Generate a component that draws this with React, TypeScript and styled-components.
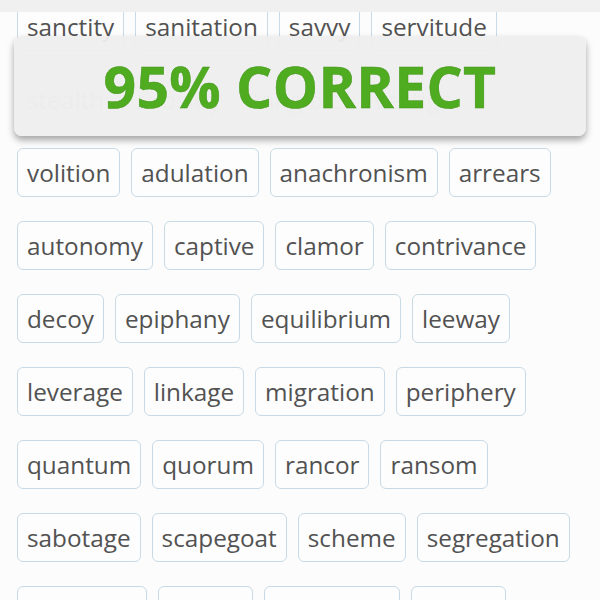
import React from "react";
import styled, { createGlobalStyle } from "styled-components";

const GlobalStyle = createGlobalStyle`
  html, body {
    margin: 0;
    padding: 0;
    background: #fcfcfc;
    font-family: "Open Sans", "Noto Sans", sans-serif;
  }
`;

const Screen = styled.div`
  position: relative;
  width: 600px;
  height: 600px;
  overflow: hidden;
  background: #fcfcfc;
`;

const TopStrip = styled.div`
  position: absolute;
  top: 0;
  left: 0;
  right: 0;
  height: 12px;
  background: #f0f0f0;
  z-index: 2;
`;

const WordList = styled.div`
  display: flex;
  flex-direction: column;
  gap: 24px;
  padding: 2px 0 0 17px;
`;

const WordRow = styled.div<{ $faded?: boolean }>`
  display: flex;
  gap: 11px;
  opacity: ${(p) => (p.$faded ? 0.3 : 1)};
`;

const Tag = styled.div`
  box-sizing: border-box;
  height: 49px;
  padding: 1px 9px 0;
  display: flex;
  align-items: center;
  border: 1.5px solid #c8dae5;
  border-radius: 6px;
  background: #fdfdfd;
  color: #525252;
  font-size: 24.3px;
  line-height: 1;
  white-space: nowrap;
`;

const ScoreBanner = styled.div`
  position: absolute;
  top: 36px;
  left: 14px;
  width: 572px;
  height: 100px;
  border-radius: 8px;
  background: rgba(238, 238, 238, 0.95);
  box-shadow: 0 4px 7px rgba(0, 0, 0, 0.35);
  display: flex;
  align-items: center;
  justify-content: center;
  z-index: 3;
`;

const ScoreText = styled.span`
  color: #4fab20;
  font-size: 57px;
  font-weight: 700;
  letter-spacing: 0.3px;
  -webkit-text-stroke: 0.5px #43951a;
`;

const rows: string[][] = [
  ["sanctity", "sanitation", "savvy", "servitude"],
  ["stealth", "subsidy", "tangible", "vestige"],
  ["volition", "adulation", "anachronism", "arrears"],
  ["autonomy", "captive", "clamor", "contrivance"],
  ["decoy", "epiphany", "equilibrium", "leeway"],
  ["leverage", "linkage", "migration", "periphery"],
  ["quantum", "quorum", "rancor", "ransom"],
  ["sabotage", "scapegoat", "scheme", "segregation"],
  ["sovereign", "stigma", "stratagem", "tenure"],
];

export default function App() {
  return (
    <Screen>
      <GlobalStyle />
      <TopStrip />
      <WordList>
        {rows.map((row, i) => (
          <WordRow key={i} $faded={i === 1}>
            {row.map((w) => (
              <Tag key={w}>{w}</Tag>
            ))}
          </WordRow>
        ))}
      </WordList>
      <ScoreBanner>
        <ScoreText>95% CORRECT</ScoreText>
      </ScoreBanner>
    </Screen>
  );
}
